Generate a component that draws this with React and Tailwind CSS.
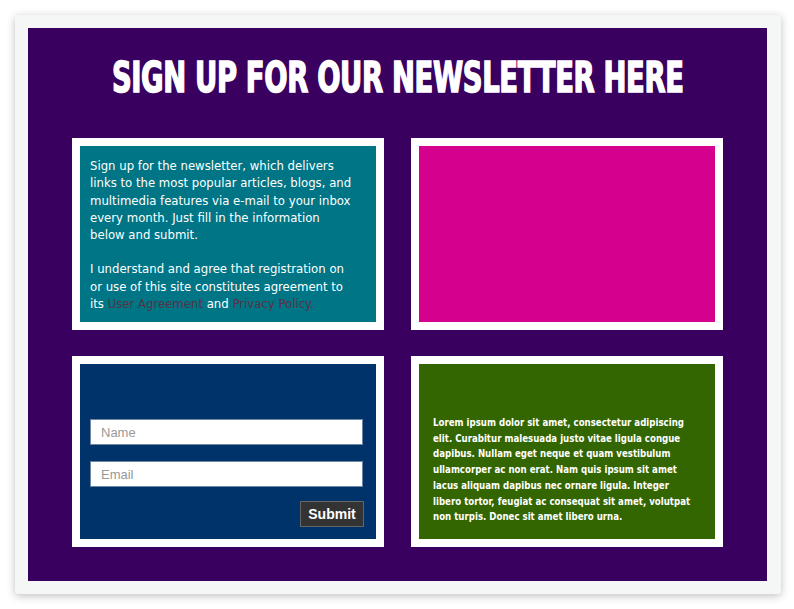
import React from 'react';

const verdana = { fontFamily: '"DejaVu Sans Condensed", Verdana, sans-serif' };

export default function App() {
  return (
    <div className="w-[794px] h-[609px] bg-white pt-[15px] pl-[15px]">
      {/* Outer card */}
      <div className="w-[766px] h-[579px] bg-[#f5f7f7] rounded-[3px] shadow-[0_2px_8px_rgba(0,0,0,0.25)] pt-[13px] pl-[13px]">
        <div className="w-[739px] h-[553px] bg-[#3a005f] flex flex-col items-center">
          {/* Title */}
          <h1 className="mt-[28px] h-[44px] shrink-0 whitespace-nowrap flex items-center text-white text-[42px] leading-none font-bold tracking-[-0.5px] [-webkit-text-stroke:1.5px_white] font-['Impact','DejaVu_Sans_Condensed',sans-serif] [transform:scaleX(0.726)]">
            SIGN UP FOR OUR NEWSLETTER HERE
          </h1>

          <div className="mt-[38px] grid grid-cols-[312px_312px] gap-x-[27px] gap-y-[26px]">
            {/* Intro text */}
            <div className="h-[192px] bg-white p-[8px]">
              <div className="h-full bg-[#007586] pl-[10px] pr-[18px] pt-[11px] text-white text-[13px] leading-[17.3px]" style={verdana}>
                <p>
                  Sign up for the newsletter, which delivers links to the most popular articles, blogs, and multimedia features via e-mail to your inbox every month. Just fill in the information below and submit.
                </p>
                <p className="mt-[17px]">
                  I understand and agree that registration on or use of this site constitutes agreement to its{' '}
                  <a className="text-[#553344]">User Agreement</a> and{' '}
                  <a className="text-[#553344]">Privacy Policy.</a>
                </p>
              </div>
            </div>

            {/* Magenta block */}
            <div className="h-[192px] bg-white p-[8px]">
              <div className="h-full bg-[#d6008f]" />
            </div>

            {/* Form */}
            <div className="h-[191px] bg-white p-[8px]">
              <form className="h-full bg-[#00336a] flex flex-col justify-end pl-[10px] pr-[13px] pb-[12px] font-['Liberation_Sans',Arial,sans-serif]">
                <input
                  placeholder="Name"
                  className="h-[26px] w-full bg-white px-[10px] text-[13px] text-gray-700 placeholder:text-[#999] border border-[#6d87a8] outline-none"
                />
                <input
                  placeholder="Email"
                  className="mt-[16px] h-[26px] w-full bg-white px-[10px] text-[13px] text-gray-700 placeholder:text-[#999] border border-[#6d87a8] outline-none"
                />
                <div className="mt-[14px] flex justify-end -mr-[1px]">
                  <button
                    type="button"
                    className="h-[26px] w-[64px] bg-[#333333] border border-[#666] text-white text-[14px] font-bold"
                  >
                    Submit
                  </button>
                </div>
              </form>
            </div>

            {/* Lorem text */}
            <div className="h-[191px] bg-white p-[8px]">
              <div className="h-full bg-[#336600] flex flex-col justify-end pl-[14px] pr-[20px] pb-[14px] text-white text-[9.6px] font-bold leading-[15.7px]" style={verdana}>
                <p>
                  Lorem ipsum dolor sit amet, consectetur adipiscing elit. Curabitur malesuada justo vitae ligula congue dapibus. Nullam eget neque et quam vestibulum ullamcorper ac non erat. Nam quis ipsum sit amet lacus aliquam dapibus nec ornare ligula. Integer libero tortor, feugiat ac consequat sit amet, volutpat non turpis. Donec sit amet libero urna.
                </p>
              </div>
            </div>
          </div>
        </div>
      </div>
    </div>
  );
}
